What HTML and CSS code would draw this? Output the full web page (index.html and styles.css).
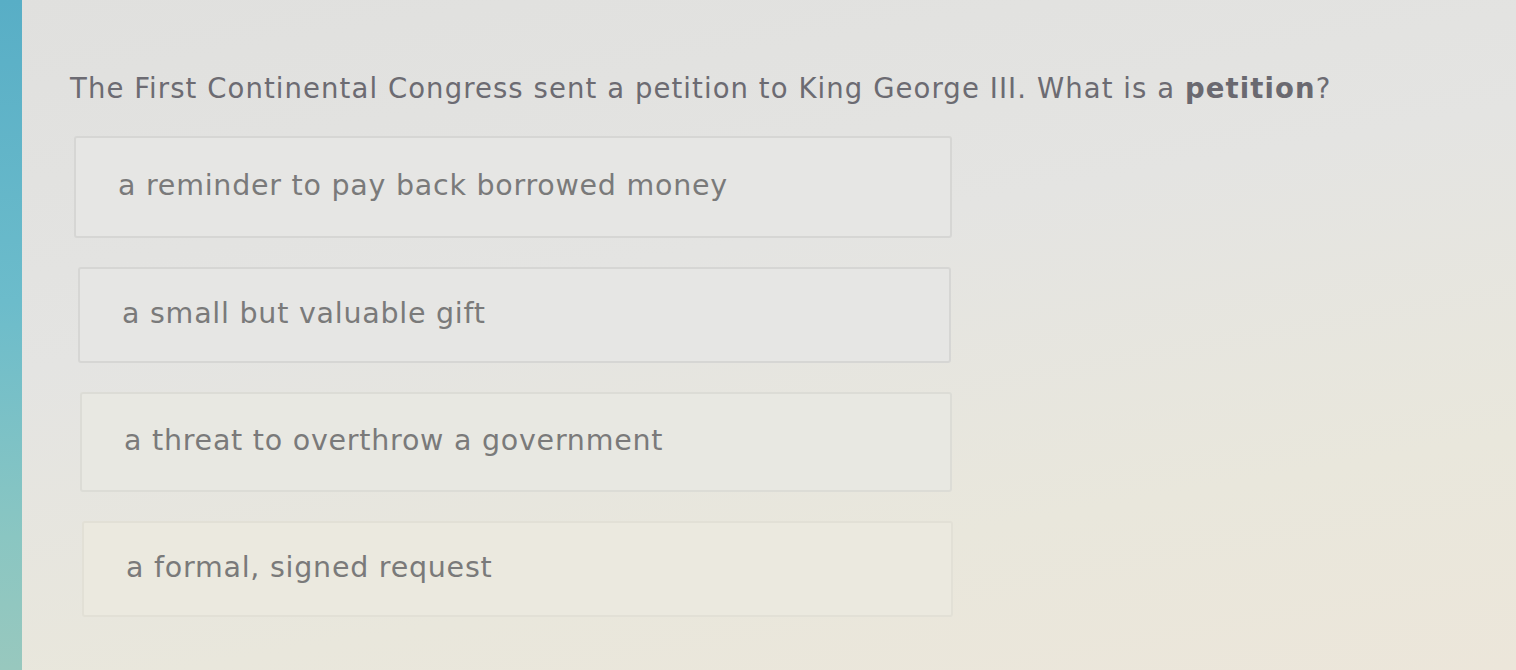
FILE: index.html
```html
<!DOCTYPE html>
<html>
  <head>
    <meta charset="UTF-8" />
    <title>Question</title>
    <link rel="stylesheet" href="styles.css">
  </head>
  <body>
    <div class="screen">
      <div class="edge"></div>
      <div class="quiz">
        <h1 class="question">The First Continental Congress sent a petition to King George III. What is a <b>petition</b>?</h1>
        <div class="answers">
          <div class="answer a1">a reminder to pay back borrowed money</div>
          <div class="answer a2">a small but valuable gift</div>
          <div class="answer a3">a threat to overthrow a government</div>
          <div class="answer a4">a formal, signed request</div>
        </div>
      </div>
    </div>
  </body>
</html>
```

FILE: styles.css
```css
body {
  margin: 0;
  font-family: "DejaVu Sans", Verdana, sans-serif;
}
.screen {
  display: flex;
  height: 670px;
  background: linear-gradient(170deg, #e0e0de 0%, #e4e4e2 40%, #e9e7dc 75%, #ece6da 100%);
}
.edge {
  width: 22px;
  background: linear-gradient(180deg, #58aec6 0%, #6cbccb 45%, #8ac6c2 80%, #98c8be 100%);
}
.quiz {
  flex: 1;
  padding: 72px 0 0 48px;
}
.question {
  margin: 0;
  font-size: 27.5px;
  font-weight: normal;
  color: #6c6b72;
  letter-spacing: 1.08px;
}
.question b {
  color: #6a6970;
}
.answers {
  display: flex;
  flex-direction: column;
  gap: 29px;
  margin-top: 32px;
}
.answer {
  width: 832px;
  height: 94px;
  display: flex;
  align-items: center;
  padding-left: 42px;
  box-sizing: content-box;
  font-size: 28.5px;
  letter-spacing: 0.75px;
  color: #7a7a7a;
  border: 2px solid #d6d6d4;
  border-radius: 3px;
  background: #e6e6e4;
  padding-bottom: 4px;
}
.a1 { margin-left: 4px; }
.a2 { margin-left: 8px; width: 827px; height: 88px; }
.a3 { margin-left: 10px; width: 826px; height: 92px; border-color: #dcdcd6; background: #e8e8e2; }
.a4 { margin-left: 12px; width: 825px; height: 88px; border-color: #e2e0d6; background: #ebe9df; }
```
